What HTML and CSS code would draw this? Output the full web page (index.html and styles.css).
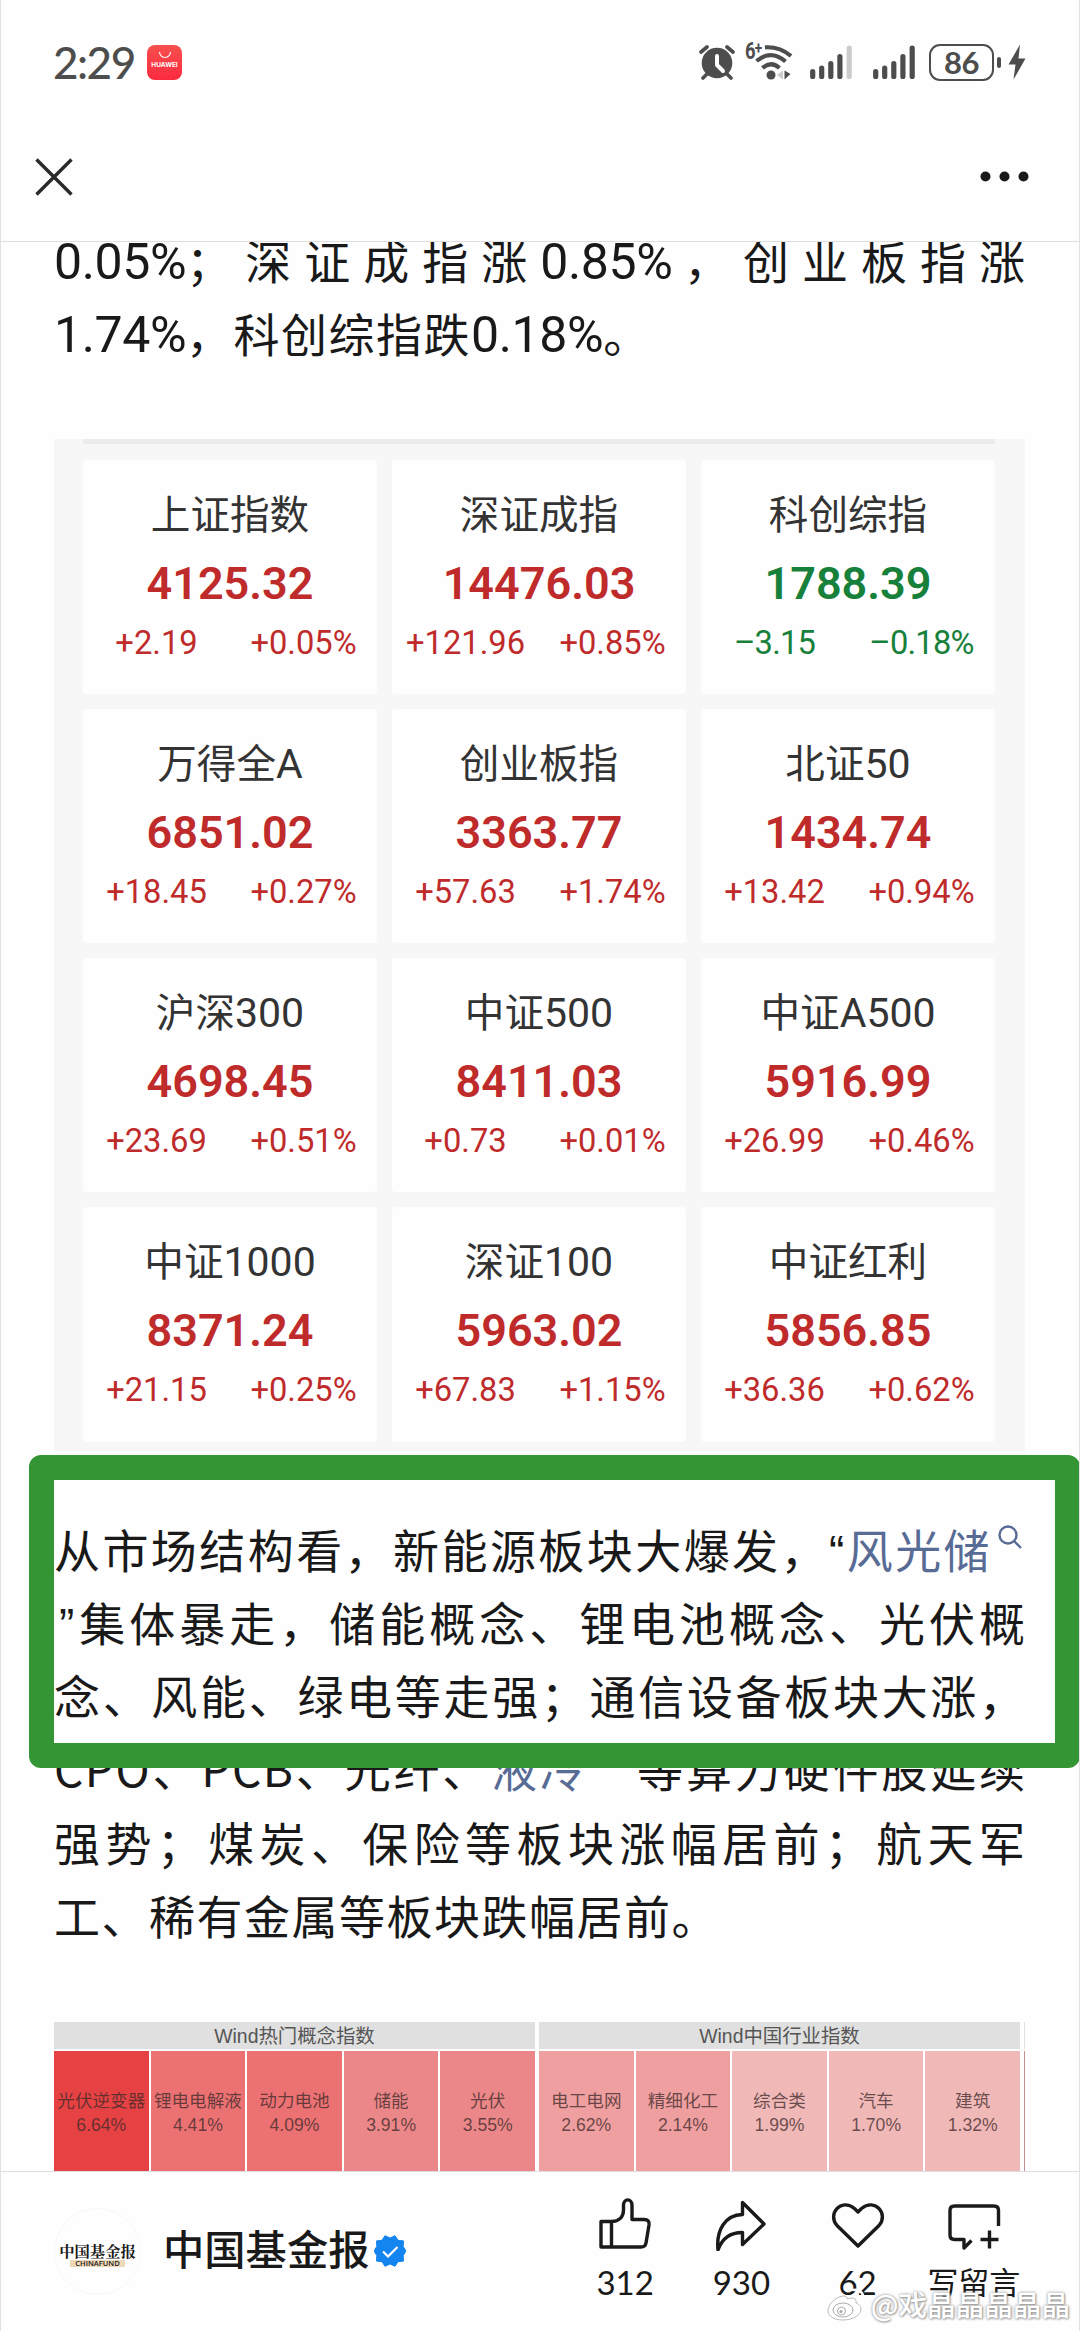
FILE: index.html
```html
<!DOCTYPE html>
<html lang="zh-CN">
<head>
  <meta charset="UTF-8" />
  <meta name="viewport" content="width=device-width, initial-scale=1.0"/>
  <title>中国基金报</title>
  <link rel="stylesheet" href="styles.css">
</head>
<body>
  <div class="page">
    <header class="top">
      <div class="status">
        <span class="time">2:29</span>
        <span class="app-icon">
          <svg width="14" height="8" viewBox="0 0 14 8"><path d="M1.5 1a5.5 5.5 0 0 0 11 0" fill="none" stroke="#fff" stroke-width="1.2"/></svg>
          <span>HUAWEI</span>
        </span>
        <div class="status-right">
          <svg class="alarm" width="36" height="36" viewBox="0 0 36 36">
            <circle cx="18" cy="19" r="15.3" fill="#4d4d4d"/>
            <path d="M2 8l6-5M34 8l-6-5M8 30l-4 4M28 30l4 4" stroke="#4d4d4d" stroke-width="3.6" stroke-linecap="round"/>
            <path d="M18 12v9l6 6" fill="none" stroke="#fff" stroke-width="4" stroke-linecap="round" stroke-linejoin="round"/>
          </svg>
          <div class="wifi">
            <span>6<sup>+</sup></span>
            <svg width="48" height="36" viewBox="0 0 48 36">
              <g fill="none" stroke="#4d4d4d" stroke-width="4.2">
                <path d="M20 3.300Q35 2.500 46 12"/>
                <path d="M11.500 17Q26 5 40.500 17.500"/>
                <path d="M17.500 24Q26 16.500 34.500 24"/>
              </g>
              <circle cx="26" cy="31" r="4.500" fill="#4d4d4d"/>
              <path d="M38 26.500v9l-6-4.500z" fill="#ccc"/>
              <path d="M39.500 26.500v9l6-5.500z" fill="#4d4d4d"/>
            </svg>
          </div>
          <svg class="signal" width="43" height="36" viewBox="0 0 43 36" stroke="#4d4d4d" stroke-width="5.200" stroke-linecap="round">
            <path d="M2.700 27.500v5M11.700 24v8.500M20.800 19.500v13M29.900 12.500v20"/>
            <path d="M39.200 4v28.500" stroke="#ccc"/>
          </svg>
          <svg class="signal" width="43" height="36" viewBox="0 0 43 36" stroke="#4d4d4d" stroke-width="5.200" stroke-linecap="round">
            <path d="M2.700 27.500v5M11.700 24v8.500M20.800 19.500v13M29.900 12.500v20M39.200 4v28.500"/>
          </svg>
          <span class="battery">86</span>
          <span class="nub"></span>
          <svg width="18" height="36" viewBox="0 0 18 36"><path d="M12 .5L.5 20.500h7L5.500 35.500 17.500 14.500h-7z" fill="#4d4d4d"/></svg>
        </div>
      </div>
      <div class="nav">
        <svg width="38" height="38" viewBox="0 0 38 38"><path d="M1.500 1.500l35 35M36.500 1.500l-35 35" stroke="#2a2a2a" stroke-width="3.400"/></svg>
        <svg width="49" height="11" viewBox="0 0 49 11" fill="#191919"><circle cx="5.500" cy="5.500" r="5"/><circle cx="24.500" cy="5.500" r="5"/><circle cx="43.500" cy="5.500" r="5"/></svg>
      </div>
    </header>

    <main class="article">
      <p class="intro">
        <span class="line full"><span class="n">0.05%</span>；深证成指涨<span class="n">0.85%</span>，创业板指涨</span>
        <span class="line"><span class="n">1.74%</span>，科创综指跌<span class="n">0.18%</span>。</span>
      </p>

      <div class="board">
        <div class="index up"><h3>上证指数</h3><strong>4125.32</strong><div class="delta"><span>+2.19</span><span>+0.05%</span></div></div>
        <div class="index up"><h3>深证成指</h3><strong>14476.03</strong><div class="delta"><span>+121.96</span><span>+0.85%</span></div></div>
        <div class="index down"><h3>科创综指</h3><strong>1788.39</strong><div class="delta"><span>–3.15</span><span>–0.18%</span></div></div>
        <div class="index up"><h3>万得全<b>A</b></h3><strong>6851.02</strong><div class="delta"><span>+18.45</span><span>+0.27%</span></div></div>
        <div class="index up"><h3>创业板指</h3><strong>3363.77</strong><div class="delta"><span>+57.63</span><span>+1.74%</span></div></div>
        <div class="index up"><h3>北证<b>50</b></h3><strong>1434.74</strong><div class="delta"><span>+13.42</span><span>+0.94%</span></div></div>
        <div class="index up"><h3>沪深<b>300</b></h3><strong>4698.45</strong><div class="delta"><span>+23.69</span><span>+0.51%</span></div></div>
        <div class="index up"><h3>中证<b>500</b></h3><strong>8411.03</strong><div class="delta"><span>+0.73</span><span>+0.01%</span></div></div>
        <div class="index up"><h3>中证<b>A500</b></h3><strong>5916.99</strong><div class="delta"><span>+26.99</span><span>+0.46%</span></div></div>
        <div class="index up"><h3>中证<b>1000</b></h3><strong>8371.24</strong><div class="delta"><span>+21.15</span><span>+0.25%</span></div></div>
        <div class="index up"><h3>深证<b>100</b></h3><strong>5963.02</strong><div class="delta"><span>+67.83</span><span>+1.15%</span></div></div>
        <div class="index up"><h3>中证红利</h3><strong>5856.85</strong><div class="delta"><span>+36.36</span><span>+0.62%</span></div></div>
      </div>

      <div class="market">
        <p>
          <span class="line full first">从市场结构看，新能源板块大爆发，<span class="q">“</span><a>风光储<svg class="search" width="24" height="24" viewBox="0 0 24 24"><circle cx="10" cy="10" r="8.500"/><path d="M16 16l7 7"/></svg></a></span>
          <span class="line full"><span class="q close">”</span>集体暴走，储能概念、锂电池概念、光伏概</span>
          <span class="line full">念、风能、绿电等走强；通信设备板块大涨，</span>
          <span class="line full">CPO、PCB、光纤、<a>液冷<svg class="search" width="24" height="24" viewBox="0 0 24 24"><circle cx="10" cy="10" r="8.500"/><path d="M16 16l7 7"/></svg></a><span class="q">”</span>等算力硬件股延续</span>
          <span class="line full">强势；煤炭、保险等板块涨幅居前；航天军</span>
          <span class="line">工、稀有金属等板块跌幅居前。</span>
        </p>
        <div class="marker"></div>
      </div>

      <div class="wind">
        <section>
          <h4>Wind热门概念指数</h4>
          <div class="cells">
            <div class="c1">光伏逆变器<br>6.64%</div>
            <div class="c2">锂电电解液<br>4.41%</div>
            <div class="c2">动力电池<br>4.09%</div>
            <div class="c3">储能<br>3.91%</div>
            <div class="c3">光伏<br>3.55%</div>
          </div>
        </section>
        <section>
          <h4>Wind中国行业指数</h4>
          <div class="cells">
            <div class="c4">电工电网<br>2.62%</div>
            <div class="c4">精细化工<br>2.14%</div>
            <div class="c5">综合类<br>1.99%</div>
            <div class="c5">汽车<br>1.70%</div>
            <div class="c5">建筑<br>1.32%</div>
          </div>
        </section>
        <section class="sliver"><h4></h4><div class="cells"><div></div></div></section>
      </div>
    </main>

    <footer class="bottom">
      <div class="avatar"><b>中国基金报</b><span>CHINAFUND</span></div>
      <span class="name">中国基金报</span>
      <svg class="badge" width="32" height="32" viewBox="0 0 32 32">
        <path d="M16 3l5-2.300 3 4.600 5.500.6-.3 5.500L32 16l-2.800 4.600.3 5.500-5.500.6-3 4.600L16 29l-5 2.300-3-4.600-5.500-.6.300-5.500L0 16l2.800-4.600-.3-5.500L8 5.300 11 .7z" fill="#1485ee" stroke="#1485ee" stroke-linejoin="round"/>
        <path d="M9 16.500l5 5L23.500 12" fill="none" stroke="#fff" stroke-width="2.200"/>
      </svg>
      <div class="actions">
        <div>
          <svg width="54" height="54" viewBox="0 0 54 54">
            <path d="M3 24.500h10.500V50H3zM13.500 24.500C21 24.500 25.500 20 25.500 13V8.500c0-7.500 8.500-7.500 8.500 0V22.500h12c4 0 5.500 2 5 5.500l-3 18c-.5 2.800-2 4-5 4H13.500" />
          </svg>
          <span>312</span>
        </div>
        <div>
          <svg width="54" height="54" viewBox="0 0 54 54">
            <path d="M28.500 5.500L50 27 28.500 47.500V35.500C15 35.500 7.500 43 4 53 2 33 11 18 28.500 17.500z"/>
          </svg>
          <span>930</span>
        </div>
        <div>
          <svg width="54" height="54" viewBox="0 0 54 54">
            <path d="M27 49L6 28.500C-4 17 10 .5 23.500 11.500L27 15l3.500-3.500C44 .5 58 17 48 28.500z"/>
          </svg>
          <span>62</span>
        </div>
        <div>
          <svg width="54" height="54" viewBox="0 0 54 54">
            <path d="M51.500 29V13.500q0-4.500-4.500-4.500H7.500Q3 9 3 13.500V38q0 4.500 4.500 4.500H17V51l7.500-7.500M33.500 42.500h18M42.500 33.500v18"/>
          </svg>
          <span class="cjk">写留言</span>
        </div>
      </div>
    </footer>

    <div class="watermark">
      <svg width="40" height="34" viewBox="0 0 40 34">
        <path d="M16 9C8 10 1 18 1 24c0 5 6 9 15 9 10 0 18-5 18-11 0-4-3-5-5-6 1-5-4-6-9-4 0-2-1-3-4-3z" fill="#fff" stroke="#bbb"/>
        <ellipse cx="16" cy="23" rx="10" ry="7" fill="#fff" stroke="#aaa"/>
        <circle cx="14.500" cy="24" r="4" fill="none" stroke="#aaa"/>
        <circle cx="14" cy="24.500" r="1.500" fill="#aaa"/>
        <path d="M25 3q12-2 12 12M26 8q6 0 6 7" fill="none" stroke="#fff" stroke-width="2.500"/>
      </svg>
      <span>@戏晶晶晶晶晶</span>
    </div>
  </div>
</body>
</html>
```
FILE: styles.css
```css
* {
  box-sizing: border-box;
}

body {
  margin: 0;
  background: #fefefe;
  color: #191919;
  font-family: Roboto, "Noto Sans CJK SC", sans-serif;
}

h3, h4, p {
  margin: 0;
  font-weight: 400;
}

svg {
  display: block;
  flex: none;
}

.page {
  position: relative;
  display: flex;
  flex-direction: column;
  height: 2331px;
  overflow: hidden;
  border-left: 1px solid #e2e2e2;
  border-right: 1px solid #e2e2e2;
}

/* status bar + nav */
.top {
  height: 242px;
  border-bottom: 1px solid #dedede;
  flex: none;
}

.status {
  display: flex;
  align-items: center;
  height: 124px;
  padding: 0 53px 0 52px;
  color: #4d4d4d;
}

.time {
  width: 94px;
  font-family: Lato, sans-serif;
  font-size: 44px;
  font-weight: 500;
  letter-spacing: -1.5px;
}

.app-icon {
  display: flex;
  flex-direction: column;
  align-items: center;
  width: 35px;
  height: 35px;
  padding-top: 6px;
  border-radius: 8px;
  background: linear-gradient(#f8504e, #fb2a3f);
  color: #fff;
  font: 700 6.5px/12px Inter, sans-serif;
}

.status-right {
  display: flex;
  align-items: center;
  margin-left: auto;
}

.wifi {
  position: relative;
  margin: 0 17px 0 10px;
}

.wifi span {
  position: absolute;
  left: 0;
  top: -4px;
  font: 700 23px/24px Roboto, sans-serif;
  letter-spacing: -1px;
  transform: scaleX(.8);
  transform-origin: 0 0;
}

.wifi sup {
  font-size: 17px;
  line-height: 0;
  vertical-align: 5px;
}

.signal {
  margin-right: 20px;
}

.signal + .battery {
  margin-left: -7px;
}

.battery {
  width: 65px;
  height: 37px;
  border: 2.5px solid #4d4d4d;
  border-radius: 11px;
  font: 700 31px/32px Lato, sans-serif;
  letter-spacing: -.5px;
  text-align: center;
}

.nub {
  width: 4px;
  height: 11px;
  margin: 0 7px 0 3px;
  border-radius: 2px;
  background: #4d4d4d;
}

.nav {
  display: flex;
  align-items: center;
  justify-content: space-between;
  height: 105px;
  padding: 0 50px 0 34px;
}

/* article */
.article {
  flex: 1;
  min-height: 0;
  overflow: hidden;
  padding: 0 54px 0 53px;
}

.line {
  display: block;
  height: 73.3px;
  font: 46px/73.3px "Noto Sans CJK SC", sans-serif;
  letter-spacing: 1.5px;
  white-space: nowrap;
}

.full {
  margin-right: -1.5px;
  text-align-last: justify;
}

.first {
  margin-right: 3px;
  letter-spacing: 1.2px;
}

.n {
  font-family: Roboto, sans-serif;
  font-size: 50px;
  line-height: 0;
  letter-spacing: -.4px;
}

.q {
  font-family: "Liberation Sans", sans-serif;
  line-height: 0;
}

.close {
  padding: 0 1px 0 5px;
}

.intro {
  margin-top: -19px;
}

.line a {
  color: #576b95;
}

.search {
  display: inline-block;
  margin-left: 6px;
  vertical-align: 19px;
  fill: none;
  stroke: #576b95;
  stroke-width: 2.4;
}

.board {
  display: grid;
  grid-template-columns: repeat(3, 294px);
  grid-auto-rows: 234.3px;
  gap: 15px;
  height: 1012px;
  margin-top: 69px;
  padding: 21px 29px 0;
  background: linear-gradient(#ececec, #ececec) 29px 0 / 912px 5px no-repeat #f7f7f7;
}

.index {
  padding-top: 22px;
  border-radius: 4px;
  background: #fefefe;
  text-align: center;
}

.index h3 {
  height: 60px;
  color: #333;
  font: 39.6px/59px "Noto Sans CJK SC", sans-serif;
}

.index b {
  font-family: Roboto, sans-serif;
  font-weight: 400;
  font-size: 41px;
  line-height: 0;
}

.index strong {
  display: block;
  height: 84px;
  font-size: 45px;
  font-weight: 600;
  line-height: 84px;
}

.delta {
  display: grid;
  grid-template-columns: 1fr 1fr;
  font-size: 32.7px;
  line-height: 34px;
}

.up {
  color: #bf2b2b;
}

.down {
  color: #17803a;
}

.down .delta {
  letter-spacing: -.8px;
}

.market {
  position: relative;
  margin-top: 61px;
}

/* green highlight drawn over the paragraph */
.marker {
  position: absolute;
  left: -25px;
  top: -57px;
  width: 1051px;
  height: 313px;
  border: 25px solid #339533;
  border-radius: 12px;
}

.wind {
  display: flex;
  gap: 4px;
  width: 971px;
  margin-top: 71px;
  overflow: hidden;
  font: 17.6px/24px "Liberation Sans", "Noto Sans CJK SC", sans-serif;
  color: rgba(60, 40, 40, .75);
  text-align: center;
}

.wind section {
  width: 481px;
  flex: none;
}

.wind h4 {
  height: 27px;
  margin-bottom: 2px;
  background: #e0e0e0;
  color: #555;
  font-size: 19.4px;
  line-height: 28px;
}

.cells {
  display: grid;
  grid-template-columns: repeat(5, 1fr);
  gap: 2px;
}

.cells div {
  height: 130px;
  padding-top: 38px;
  white-space: nowrap;
}

.wind .sliver {
  width: 2px;
}

.sliver .cells {
  grid-template-columns: 2px;
  background: #c98f8f;
}

.c1 { background: #e64244; }
.c2 { background: #eb7173; }
.c3 { background: #eb8788; }
.c4 { background: #ef9fa0; }
.c5 { background: #f1b8b8; }

/* bottom bar */
.bottom {
  display: flex;
  align-items: flex-start;
  flex: none;
  height: 160px;
  padding-left: 53px;
  border-top: 1px solid #dedede;
}

.avatar {
  display: flex;
  flex-direction: column;
  align-items: center;
  width: 87px;
  height: 87px;
  margin-top: 36px;
  padding-top: 32px;
  border: 1px solid #f7f7f7;
  border-radius: 50%;
}

.avatar b {
  font: 700 15.3px/18px "Noto Serif CJK SC", "Noto Sans CJK SC", serif;
  white-space: nowrap;
}

.avatar span {
  width: 55px;
  margin-top: 1px;
  background: #efd8b8;
  font: 600 7.5px/7px "Open Sans", sans-serif;
  text-align: center;
}

.name {
  margin: 45px 0 0 22px;
  font: 500 41.3px/60px "Noto Sans CJK SC", sans-serif;
}

.badge {
  margin: 63px 0 0 4px;
}

.actions {
  display: flex;
  width: 465px;
  margin: 25px 47px 0 auto;
}

.actions div {
  display: flex;
  flex: 1;
  flex-direction: column;
  align-items: center;
}

.actions svg {
  fill: none;
  stroke: #1a1a1a;
  stroke-width: 3.4;
  stroke-linejoin: round;
}

.actions span {
  margin-top: 8px;
  font: 33px/46px Lato, sans-serif;
}

.actions .cjk {
  margin-top: 7px;
  font: 31px/46px "Noto Sans CJK SC", sans-serif;
}

.watermark {
  position: absolute;
  right: 9px;
  bottom: 7px;
  display: flex;
  align-items: center;
  gap: 4px;
  color: #fff;
  font: 500 28.6px/40px "Noto Sans CJK SC", sans-serif;
  text-shadow: 0 0 3px #888, 1px 1px 2px #aaa;
}
```
